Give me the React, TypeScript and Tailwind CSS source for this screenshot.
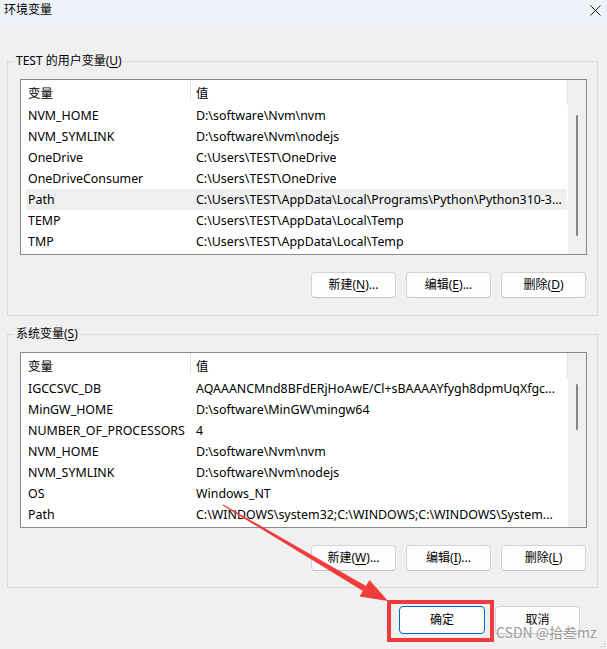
import React from "react";

type Row = [string, string];

const userRows: Row[] = [
  ["NVM_HOME", "D:\\software\\Nvm\\nvm"],
  ["NVM_SYMLINK", "D:\\software\\Nvm\\nodejs"],
  ["OneDrive", "C:\\Users\\TEST\\OneDrive"],
  ["OneDriveConsumer", "C:\\Users\\TEST\\OneDrive"],
  ["Path", "C:\\Users\\TEST\\AppData\\Local\\Programs\\Python\\Python310-3..."],
  ["TEMP", "C:\\Users\\TEST\\AppData\\Local\\Temp"],
  ["TMP", "C:\\Users\\TEST\\AppData\\Local\\Temp"],
];

const sysRows: Row[] = [
  ["IGCCSVC_DB", "AQAAANCMnd8BFdERjHoAwE/Cl+sBAAAAYfygh8dpmUqXfgc..."],
  ["MinGW_HOME", "D:\\software\\MinGW\\mingw64"],
  ["NUMBER_OF_PROCESSORS", "4"],
  ["NVM_HOME", "D:\\software\\Nvm\\nvm"],
  ["NVM_SYMLINK", "D:\\software\\Nvm\\nodejs"],
  ["OS", "Windows_NT"],
  ["Path", "C:\\WINDOWS\\system32;C:\\WINDOWS;C:\\WINDOWS\\System..."],
];

function Btn({ label, k, suffix = "" }: { label: string; k: string; suffix?: string }) {
  return (
    <div className="w-[85px] h-[26px] flex items-center justify-center bg-[#fdfdfd] border border-[#d3d3d3] border-b-[#c4c4c4] rounded-[4px] leading-[16px]">
      <span>
        {label}(<u className="underline-offset-[2px]">{k}</u>){suffix}
      </span>
    </div>
  );
}

function List({
  rows,
  highlight,
  thumbTop,
  thumbH,
}: {
  rows: Row[];
  highlight?: number;
  thumbTop: string;
  thumbH: string;
}) {
  return (
    <div className="ml-[12px] mr-[10px] h-[176px] border border-[#838a93] bg-white flex text-[12.4px]">
      <div className="flex-1 pl-[5px] pr-[1px] flex flex-col">
        <div className="h-[25px] flex items-start border-r border-[#e2e2e2] mr-[-1px]">
          <div className="w-[164px] pl-[2px] pt-[4px] h-[25px] flex items-center">变量</div>
          <div className="w-px h-[20px] bg-[#e2e2e2]" />
          <div className="pl-[5px] pt-[4px] h-[25px] flex items-center">值</div>
        </div>
        {rows.map((r, i) => (
          <div
            key={i}
            className={
              "h-[21px] pt-[2px] flex items-center whitespace-nowrap " +
              (i === highlight ? "bg-[#efefef]" : "")
            }
          >
            <div className="w-[170px] pl-[2px] shrink-0">{r[0]}</div>
            <div className="overflow-hidden">{r[1]}</div>
          </div>
        ))}
      </div>
      <div className="w-[18px] bg-[#efefef] flex flex-col items-center">
        <div className={"w-[2px] bg-[#858585] rounded-full " + thumbTop + " " + thumbH} />
      </div>
    </div>
  );
}

export default function App() {
  return (
    <div className="relative w-[607px] h-[649px] overflow-hidden bg-[#f0f0f0] text-[12px] text-black font-['Noto_Sans','Noto_Sans_CJK_SC',sans-serif]">
      {/* Title bar */}
      <div className="h-[26px] bg-[#eef3f9] flex items-start justify-between pl-[4px] pr-[6px] pt-[1px]">
        <div className="leading-[18px]">环境变量</div>
        <svg width="11" height="11" viewBox="0 0 11 11" className="mt-[4px]">
          <path d="M0.5 0.5 L10.5 10.5 M10.5 0.5 L0.5 10.5" stroke="#1a1a1a" strokeWidth="1" fill="none" />
        </svg>
      </div>

      <div className="pl-[7px] pr-[9px] pt-[35px]">
        {/* User vars group */}
        <div className="border border-[#dadada] pb-[17px]">
          <div className="-mt-[10px] h-[18px] flex">
            <span className="ml-[6px] px-[2px] bg-[#f0f0f0] leading-[18px]">
              TEST 的用户变量(<u className="underline-offset-[2px]">U</u>)
            </span>
          </div>
          <div className="mt-[9px]">
            <List rows={userRows} highlight={4} thumbTop="mt-[35px]" thumbH="h-[121px]" />
          </div>
          <div className="mt-[17px] mr-[11px] flex justify-end gap-[10px]">
            <Btn label="新建" k="N" suffix="..." />
            <Btn label="编辑" k="E" suffix="..." />
            <Btn label="删除" k="D" />
          </div>
        </div>

        {/* System vars group */}
        <div className="mt-[18px] border border-[#dadada] pb-[16px]">
          <div className="-mt-[10px] h-[18px] flex">
            <span className="ml-[6px] px-[2px] bg-[#f0f0f0] leading-[18px]">
              系统变量(<u className="underline-offset-[2px]">S</u>)
            </span>
          </div>
          <div className="mt-[9px]">
            <List rows={sysRows} thumbTop="mt-[31px]" thumbH="h-[46px]" />
          </div>
          <div className="mt-[17px] mr-[11px] flex justify-end gap-[10px]">
            <Btn label="新建" k="W" suffix="..." />
            <Btn label="编辑" k="I" suffix="..." />
            <Btn label="删除" k="L" />
          </div>
        </div>

        {/* OK / Cancel */}
        <div className="mt-[18px] mr-[18px] flex justify-end gap-[10px]">
          <div className="w-[86px] h-[28px] flex items-center justify-center bg-[#fdfdfd] border border-[#0067c0] rounded-[4px]">
            确定
          </div>
          <div className="w-[85px] h-[28px] flex items-center justify-center bg-[#fdfdfd] border border-[#d3d3d3] border-b-[#c4c4c4] rounded-[4px]">
            取消
          </div>
        </div>
      </div>

      {/* Annotation: red box */}
      <div className="absolute left-[387px] top-[600px] w-[107px] h-[42px] border-[4px] border-[#ef3b3f]" />

      {/* Annotation: arrow */}
      <svg className="absolute left-0 top-0 pointer-events-none" width="607" height="649" viewBox="0 0 607 649">
        <polygon points="222.7,505.5 223.3,504.5 366,586 363,591" fill="#f03c3c" />
        <polygon points="388,601 359.5,596.5 369.5,580" fill="#f03c3c" />
      </svg>

      {/* Watermark */}
      <div className="absolute left-[496px] top-[622px] text-[14px] leading-[20px] text-[#9c9c9c] [text-shadow:0_0_2px_#ffffff] font-['Noto_Sans_CJK_SC',sans-serif] whitespace-nowrap">
        CSDN @拾叁mz
      </div>

      {/* size grip */}
      <div className="absolute right-[2px] bottom-[2px] w-[6px] h-[6px]">
        <div className="absolute right-0 bottom-0 w-[1px] h-[1px] bg-[#9a9a9a]" />
        <div className="absolute right-[3px] bottom-0 w-[1px] h-[1px] bg-[#9a9a9a]" />
        <div className="absolute right-0 bottom-[3px] w-[1px] h-[1px] bg-[#9a9a9a]" />
      </div>
    </div>
  );
}
